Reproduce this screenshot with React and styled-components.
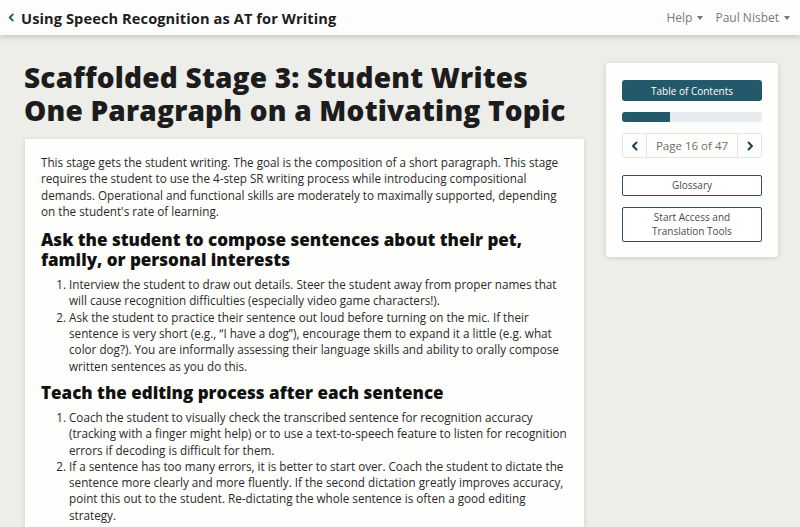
import React from "react";
import styled, { createGlobalStyle } from "styled-components";

const Global = createGlobalStyle`
  html, body { margin: 0; padding: 0; background: #ededea; }
  body { font-family: "Open Sans", "DejaVu Sans", sans-serif; color: #222; }
  * { box-sizing: border-box; }
`;

const Nav = styled.header`
  height: 35px;
  background: #fdfdfd;
  box-shadow: 0 2px 6px rgba(0,0,0,0.18);
  display: flex;
  align-items: center;
  justify-content: space-between;
  padding: 0 10px 0 7px;
  position: relative;
  z-index: 2;
`;

const Brand = styled.a`
  display: flex;
  align-items: center;
  gap: 5px;
  font-weight: 700;
  font-size: 14.6px;
  color: #1d1d1d;
  text-decoration: none;
  letter-spacing: 0.1px;
`;

const NavRight = styled.nav`
  display: flex;
  gap: 12px;
  font-size: 12px;
  color: #7a7a7a;
`;

const Drop = styled.span`
  display: flex;
  align-items: center;
  gap: 5px;
  &::after {
    content: "";
    border-left: 3.5px solid transparent;
    border-right: 3.5px solid transparent;
    border-top: 4px solid #777;
  }
`;

const Main = styled.div`
  display: flex;
  align-items: flex-start;
  gap: 22px;
  padding: 26px 0 0 24px;
`;

const Column = styled.div`
  width: 560px;
`;

const H1 = styled.h1`
  margin: 0 0 12px;
  font-size: 28px;
  line-height: 33px;
  font-weight: 800;
  color: #1c1c1c;
  letter-spacing: 0.2px;
`;

const Card = styled.article`
  margin-left: 1px;
  background: #fefefc;
  box-shadow: 0 1px 5px rgba(0,0,0,0.15);
  padding: 15px 16px 20px;
  font-size: 11.7px;
  line-height: 16.3px;
  color: #2a2a2a;
`;

const P = styled.p`
  margin: 0 0 11px;
`;

const H2 = styled.h2`
  margin: 0 0 6px;
  font-size: 17px;
  line-height: 20px;
  font-weight: 800;
  color: #111;
`;

const OL = styled.ol`
  margin: 0 0 9px;
  padding-left: 28px;
`;

const LI = styled.li``;

const Side = styled.aside`
  width: 172px;
  margin-top: 2px;
  background: #fefefc;
  border-radius: 3px;
  box-shadow: 0 1px 5px rgba(0,0,0,0.15);
  padding: 17px 16px 15px;
  display: flex;
  flex-direction: column;
`;

const TocButton = styled.button`
  height: 21px;
  border: none;
  border-radius: 3px;
  background: #23596a;
  color: #fff;
  font-family: inherit;
  font-size: 10px;
  cursor: pointer;
`;

const Progress = styled.div`
  margin-top: 11px;
  height: 10px;
  border-radius: 3px;
  background: #e8ebee;
  overflow: hidden;
`;

const Fill = styled.div`
  height: 100%;
  background: #23596a;
`;

const Pager = styled.div`
  margin-top: 11px;
  height: 25px;
  display: flex;
  border: 1px solid #e4e6e8;
  border-radius: 3px;
`;

const PageArrow = styled.button`
  width: 24px;
  border: none;
  background: transparent;
  display: flex;
  align-items: center;
  justify-content: center;
  padding: 0;
  ${p => p.$left ? "border-right: 1px solid #e4e6e8;" : "border-left: 1px solid #e4e6e8;"}
`;

const PageLabel = styled.span`
  flex: 1;
  display: flex;
  align-items: center;
  justify-content: center;
  font-size: 11.5px;
  color: #6d6d6d;
`;

const OutlineButton = styled.button`
  margin-top: ${p => p.$mt}px;
  border: 1px solid #2b4f5c;
  border-radius: 2px;
  background: #fff;
  color: #4a4a4a;
  font-family: inherit;
  font-size: 10px;
  line-height: 14.5px;
  padding: 2px 4px 2px;
`;

const Chevron = ({ dir = "left", size = 10, color = "#1f3f4c" }) => (
  <svg width={size} height={size} viewBox="0 0 10 10">
    <path
      d={dir === "left" ? "M6.5 1.5 L3 5 L6.5 8.5" : "M3.5 1.5 L7 5 L3.5 8.5"}
      fill="none"
      stroke={color}
      strokeWidth="2"
      strokeLinecap="round"
      strokeLinejoin="round"
    />
  </svg>
);

export default function App() {
  const page = 16, total = 47;
  return (
    <>
      <Global />
      <Nav>
        <Brand href="#">
          <Chevron dir="left" size={9} color="#23596a" />
          Using Speech Recognition as AT for Writing
        </Brand>
        <NavRight>
          <Drop>Help</Drop>
          <Drop>Paul Nisbet</Drop>
        </NavRight>
      </Nav>
      <Main>
        <Column>
          <H1>Scaffolded Stage 3: Student Writes One Paragraph on a Motivating Topic</H1>
          <Card>
            <P>
              This stage gets the student writing. The goal is the composition of a short paragraph. This stage
              requires the student to use the 4-step SR writing process while introducing compositional
              demands. Operational and functional skills are moderately to maximally supported, depending
              on the student's rate of learning.
            </P>
            <H2>Ask the student to compose sentences about their pet, family, or personal interests</H2>
            <OL>
              <LI>Interview the student to draw out details. Steer the student away from proper names that will cause recognition difficulties (especially video game characters!).</LI>
              <LI>Ask the student to practice their sentence out loud before turning on the mic. If their sentence is very short (e.g., “I have a dog”), encourage them to expand it a little (e.g. what color dog?). You are informally assessing their language skills and ability to orally compose written sentences as you do this.</LI>
            </OL>
            <H2>Teach the editing process after each sentence</H2>
            <OL>
              <LI>Coach the student to visually check the transcribed sentence for recognition accuracy (tracking with a finger might help) or to use a text-to-speech feature to listen for recognition errors if decoding is difficult for them.</LI>
              <LI>If a sentence has too many errors, it is better to start over. Coach the student to dictate the sentence more clearly and more fluently. If the second dictation greatly improves accuracy, point this out to the student. Re-dictating the whole sentence is often a good editing strategy.</LI>
            </OL>
          </Card>
        </Column>
        <Side>
          <TocButton>Table of Contents</TocButton>
          <Progress>
            <Fill style={{ width: `${(page / total) * 100}%` }} />
          </Progress>
          <Pager>
            <PageArrow $left aria-label="Previous page"><Chevron dir="left" /></PageArrow>
            <PageLabel>Page {page} of {total}</PageLabel>
            <PageArrow aria-label="Next page"><Chevron dir="right" /></PageArrow>
          </Pager>
          <OutlineButton $mt={17}>Glossary</OutlineButton>
          <OutlineButton $mt={11}>Start Access and<br />Translation Tools</OutlineButton>
        </Side>
      </Main>
    </>
  );
}
